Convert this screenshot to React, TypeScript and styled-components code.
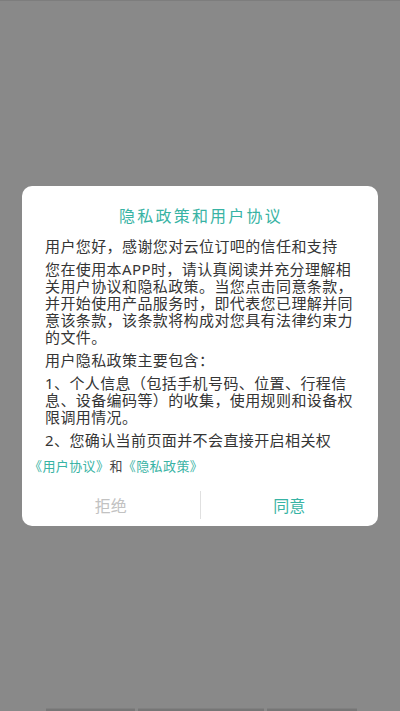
import React from "react";
import styled, { createGlobalStyle } from "styled-components";

const GlobalStyle = createGlobalStyle`
  html, body, #root {
    margin: 0;
    padding: 0;
    height: 100%;
  }
  body {
    font-family: "Noto Sans", "Noto Sans CJK SC", "Liberation Sans", sans-serif;
    background: #898989;
  }
  * { box-sizing: border-box; }
`;

const TEAL = "#38b3a4";

const Page = styled.div`
  height: 711px;
  width: 100%;
  background: #898989;
  border-top: 1px solid #7d7d7d;
  display: grid;
  grid-template-rows: 1fr auto 1fr;
  justify-items: center;
`;

const Spacer = styled.div``;

const BottomArea = styled.div`
  align-self: end;
  width: 100%;
  display: flex;
  justify-content: center;
  gap: 3px;
  padding-left: 2px;
`;

const TabStub = styled.div<{ $w: number }>`
  width: ${(p) => p.$w}px;
  height: 3px;
  background: #767676;
  border-top: 1px solid #808080;
`;

const Dialog = styled.div`
  width: 356px;
  height: 340px;
  background: #ffffff;
  border-radius: 10px;
  display: flex;
  flex-direction: column;
  overflow: hidden;
`;

const Title = styled.div`
  padding: 20px 0 12px;
  line-height: 20px;
  font-size: 16px;
  letter-spacing: 2.2px;
  text-indent: 2px;
  text-align: center;
  color: ${TEAL};
`;

const Body = styled.div`
  height: 211px;
  overflow: hidden;
  padding: 0 23px;
`;

const Para = styled.p`
  margin: 0 0 6px;
  font-size: 15px;
  line-height: 17px;
  letter-spacing: 0.4px;
  color: #353535;
`;

const Links = styled.div`
  margin-top: 10px;
  padding-left: 7px;
  font-size: 13px;
  letter-spacing: 0.4px;
  line-height: 14px;
  color: #444;
`;

const LinkText = styled.span`
  color: ${TEAL};
`;

const Buttons = styled.div`
  margin-top: auto;
  padding-bottom: 4px;
  display: flex;
  align-items: center;
`;

const Btn = styled.button<{ $primary?: boolean }>`
  flex: 1;
  height: 34px;
  border: none;
  background: transparent;
  font-family: inherit;
  font-size: 16px;
  color: ${(p) => (p.$primary ? TEAL : "#c2c2c2")};
  padding: 0;
  cursor: pointer;
`;

const Divider = styled.div`
  width: 1px;
  height: 28px;
  background: #e0e0e0;
`;

export default function App() {
  return (
    <>
      <GlobalStyle />
      <Page>
        <Spacer />
        <Dialog>
          <Title>隐私政策和用户协议</Title>
          <Body>
            <Para>用户您好，感谢您对云位订吧的信任和支持</Para>
            <Para>
              您在使用本APP时，请认真阅读并充分理解相关用户协议和隐私政策。当您点击同意条款，并开始使用产品服务时，即代表您已理解并同意该条款，该条款将构成对您具有法律约束力的文件。
            </Para>
            <Para>用户隐私政策主要包含：</Para>
            <Para>
              1、个人信息（包括手机号码、位置、行程信息、设备编码等）的收集，使用规则和设备权限调用情况。
            </Para>
            <Para>
              2、您确认当前页面并不会直接开启相关权限，仅在您使用相关功能时才会向您申请授权。
            </Para>
          </Body>
          <Links>
            <LinkText>《用户协议》</LinkText>和<LinkText>《隐私政策》</LinkText>
          </Links>
          <Buttons>
            <Btn>拒绝</Btn>
            <Divider />
            <Btn $primary>同意</Btn>
          </Buttons>
        </Dialog>
        <BottomArea>
          <TabStub $w={89} />
          <TabStub $w={126} />
          <TabStub $w={90} />
        </BottomArea>
      </Page>
    </>
  );
}
